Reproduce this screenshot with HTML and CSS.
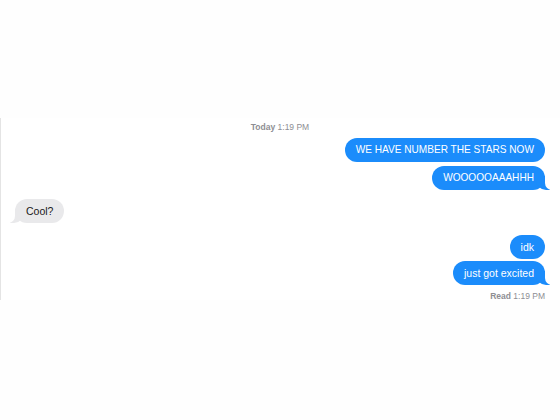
FILE: index.html
```html
<!DOCTYPE html>
<html>
<head>
<meta charset="utf-8">
<link rel="stylesheet" href="styles.css">
</head>
<body>
<div class="top"></div>
<div class="chat">
  <div class="stamp"><b>Today</b> 1:19 PM</div>
  <div class="row out first"><div class="bubble sent caps">WE HAVE NUMBER THE STARS NOW</div></div>
  <div class="row out gap-s"><div class="bubble sent caps tail">WOOOOOAAAHHH</div></div>
  <div class="row in gap-m"><div class="bubble recv tail">Cool?</div></div>
  <div class="row out gap-l"><div class="bubble sent">idk</div></div>
  <div class="row out gap-xs"><div class="bubble sent tail">just got excited</div></div>
  <div class="read"><b>Read</b> 1:19 PM</div>
</div>
</body>
</html>
```
FILE: styles.css
```css
html, body {
  margin: 0;
  padding: 0;
  background: #fefefe;
  font-family: "Liberation Sans", Arial, sans-serif;
}
.top {
  height: 118px;
}
.chat {
  height: 182px;
  box-sizing: border-box;
  background: #ffffff;
  border-left: 1px solid #e4e4e4;
  padding: 0 15px 0 14px;
  display: flex;
  flex-direction: column;
}
.stamp {
  margin-top: 3px;
  text-align: center;
  font-size: 8.5px;
  line-height: 12px;
  color: #8e8e93;
}
.stamp b, .read b {
  font-weight: 600;
}
.row {
  display: flex;
}
.row.out { justify-content: flex-end; }
.row.in { justify-content: flex-start; }
.first { margin-top: 5px; }
.gap-xs { margin-top: 2px; }
.gap-s { margin-top: 4px; }
.gap-m { margin-top: 9px; }
.gap-l { margin-top: 12px; }
.bubble {
  position: relative;
  font-size: 10.5px;
  line-height: 14px;
  padding: 5px 11px;
  border-radius: 12px;
}
.bubble.caps {
  font-size: 10.1px;
}
.sent {
  background: #1b8cfb;
  color: #ffffff;
}
.recv {
  background: #e9e9eb;
  color: #1a1a1a;
}
.sent.tail::before {
  content: "";
  position: absolute;
  bottom: 0;
  right: -5px;
  width: 14px;
  height: 14px;
  background: #1b8cfb;
  border-bottom-left-radius: 10px;
}
.sent.tail::after {
  content: "";
  position: absolute;
  bottom: 0;
  right: -9px;
  width: 9px;
  height: 14px;
  background: #ffffff;
  border-bottom-left-radius: 7px;
}
.recv.tail::before {
  content: "";
  position: absolute;
  bottom: 0;
  left: -5px;
  width: 14px;
  height: 14px;
  background: #e9e9eb;
  border-bottom-right-radius: 10px;
}
.recv.tail::after {
  content: "";
  position: absolute;
  bottom: 0;
  left: -9px;
  width: 9px;
  height: 14px;
  background: #ffffff;
  border-bottom-right-radius: 7px;
}
.read {
  margin-top: 5px;
  text-align: right;
  font-size: 8.5px;
  line-height: 12px;
  color: #8e8e93;
}
```
